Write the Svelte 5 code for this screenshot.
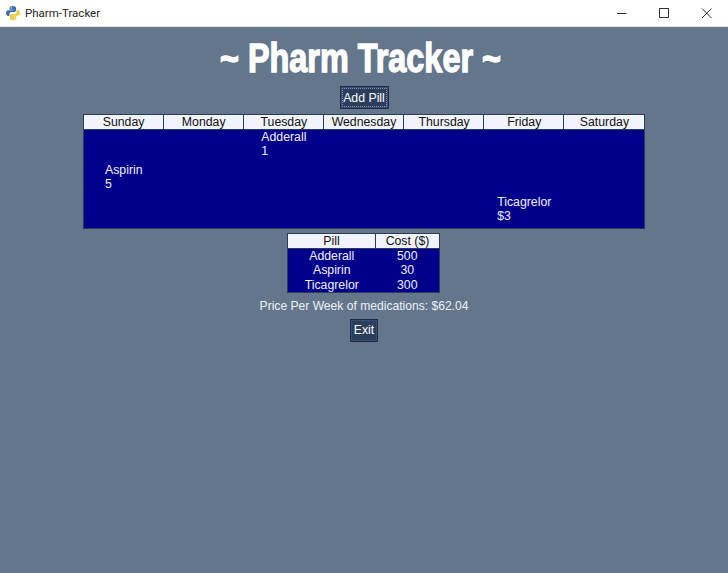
<script>
    const DAYS = ["Sunday", "Monday", "Tuesday", "Wednesday", "Thursday", "Friday", "Saturday"];

    // one row per pill, placed under the day it is taken
    const schedule = [
        { day: "Tuesday", name: "Adderall", amount: "1" },
        { day: "Sunday", name: "Aspirin", amount: "5" },
        { day: "Friday", name: "Ticagrelor", amount: "$3" },
    ];

    const pills = [
        { name: "Adderall", cost: 500 },
        { name: "Aspirin", cost: 30 },
        { name: "Ticagrelor", cost: 300 },
    ];
</script>

<div class="window">
    <div class="titlebar">
        <svg class="logo" viewBox="0 0 16 16" width="16" height="16">
            <path fill="#3a75a8" d="M7.8 1C5.6 1 4.6 1.8 4.6 3.1V4.7H8V5.3H3.2C1.8 5.3 1 6.4 1 8.1s.8 2.9 2.2 2.9H4.4V9.3c0-1.3 1-2.3 2.3-2.3h2.6c1 0 1.8-.8 1.8-1.8V3.1C11.1 1.8 9.9 1 7.8 1z" />
            <path fill="#f2ca45" d="M8.2 15c2.2 0 3.2-.8 3.2-2.1v-1.6H8v-.6h4.8c1.4 0 2.2-1.1 2.2-2.8S14.2 5 12.8 5h-1.2v1.7c0 1.3-1 2.3-2.3 2.3H6.7c-1 0-1.8.8-1.8 1.8v2.1C4.9 14.2 6.100 15 8.2 15z" />
            <circle cx="6.300" cy="2.800" r=".6" fill="#fff" />
            <circle cx="9.700" cy="13.200" r=".6" fill="#fff" />
        </svg>
        <span class="app-name">Pharm-Tracker</span>
        <div class="controls">
            <svg viewBox="0 0 44 26" width="44" height="26"><path d="M21 13.500h9.500" /></svg>
            <svg viewBox="0 0 44 26" width="44" height="26"><rect x="19.500" y="8.500" width="9" height="9" /></svg>
            <svg viewBox="0 0 44 26" width="44" height="26"><path d="M18 8.500l9.500 9.500M27.500 8.500l-9.500 9.500" /></svg>
        </div>
    </div>

    <main>
        <h1>~ Pharm Tracker ~</h1>
        <button class="add">Add Pill</button>

        <table class="week">
            <thead>
                <tr>
                    {#each DAYS as day}
                        <th>{day}</th>
                    {/each}
                </tr>
            </thead>
            <tbody>
                {#each schedule as row}
                    <tr>
                        {#each DAYS as day}
                            <td>
                                {#if day === row.day}
                                    <div class="entry">{row.name}<br />{row.amount}</div>
                                {/if}
                            </td>
                        {/each}
                    </tr>
                {/each}
            </tbody>
        </table>

        <table class="costs">
            <thead>
                <tr>
                    <th class="pill-col">Pill</th>
                    <th class="cost-col">Cost ($)</th>
                </tr>
            </thead>
            <tbody>
                {#each pills as pill}
                    <tr>
                        <td>{pill.name}</td>
                        <td>{pill.cost}</td>
                    </tr>
                {/each}
            </tbody>
        </table>

        <p class="price">Price Per Week of medications: $62.04</p>
        <button class="exit">Exit</button>
    </main>
</div>

<style>
    :global(body) {
        margin: 0;
    }

    .window {
        width: 728px;
        height: 573px;
        display: flex;
        flex-direction: column;
        background: #64768c;
        font-family: "Liberation Sans", Arial, sans-serif;
        overflow: hidden;
    }

    .titlebar {
        height: 26px;
        flex: none;
        display: flex;
        align-items: center;
        background: #fff;
        border-bottom: 1px solid #dfe6ee;
        color: #222;
    }

    .logo {
        margin-left: 5px;
        margin-right: 4px;
    }

    .app-name {
        font-family: Roboto, sans-serif;
        font-size: 11.500px;
    }

    .controls {
        margin-left: auto;
        display: flex;
    }

    .controls svg {
        display: block;
        fill: none;
        stroke: #333;
        stroke-width: 1;
    }

    main {
        display: flex;
        flex-direction: column;
        align-items: center;
    }

    h1 {
        margin: 7px 7px 0 0;
        height: 48px;
        color: #fff;
        font-family: "Liberation Sans", sans-serif;
        font-size: 40px;
        line-height: 48px;
        font-weight: 700;
        transform: scaleX(0.81);
        -webkit-text-stroke: 1.400px #fff;
        white-space: nowrap;
    }

    button {
        display: block;
        padding: 0;
        background: #2c3e5e;
        color: #fff;
        font-family: inherit;
        font-size: 12.300px;
        white-space: nowrap;
        border: 1px solid #1e2b44;
        box-shadow: inset 0 0 0 1px #3d4d6b;
    }

    .add {
        width: 49px;
        height: 23px;
        margin-top: 4px;
        outline: 1px dotted #8592a8;
        outline-offset: -3px;
    }

    table {
        border-collapse: collapse;
        background: #00008b;
        color: #eef0ff;
        font-size: 12.300px;
    }

    th {
        padding: 0 0 0 1px;
        height: 14px;
        font-weight: 400;
        line-height: 14px;
        background: #f1f4fb;
        color: #111;
        border: 1px solid #2c3a5c;
    }

    td {
        padding: 0 0 0 1px;
    }

    .week {
        width: 562px;
        margin: 5px 1px 0 0;
        table-layout: fixed;
        border: 1px solid #2c3a5c;
    }

    .week td {
        height: 32.600px;
        text-align: center;
        vertical-align: top;
    }

    .entry {
        display: inline-block;
        text-align: left;
        line-height: 14px;
    }

    .costs {
        margin: 4px 2px 0 0;
        border: 1px solid #2c3a5c;
    }

    .costs td {
        height: 14.300px;
        line-height: 14px;
        text-align: center;
    }

    .pill-col {
        width: 86px;
    }

    .cost-col {
        width: 62px;
    }

    .price {
        margin: 5px 0 0;
        color: #eef1f6;
        font-size: 12.100px;
        line-height: 16px;
    }

    .exit {
        width: 28px;
        height: 23px;
        margin-top: 5px;
    }
</style>
